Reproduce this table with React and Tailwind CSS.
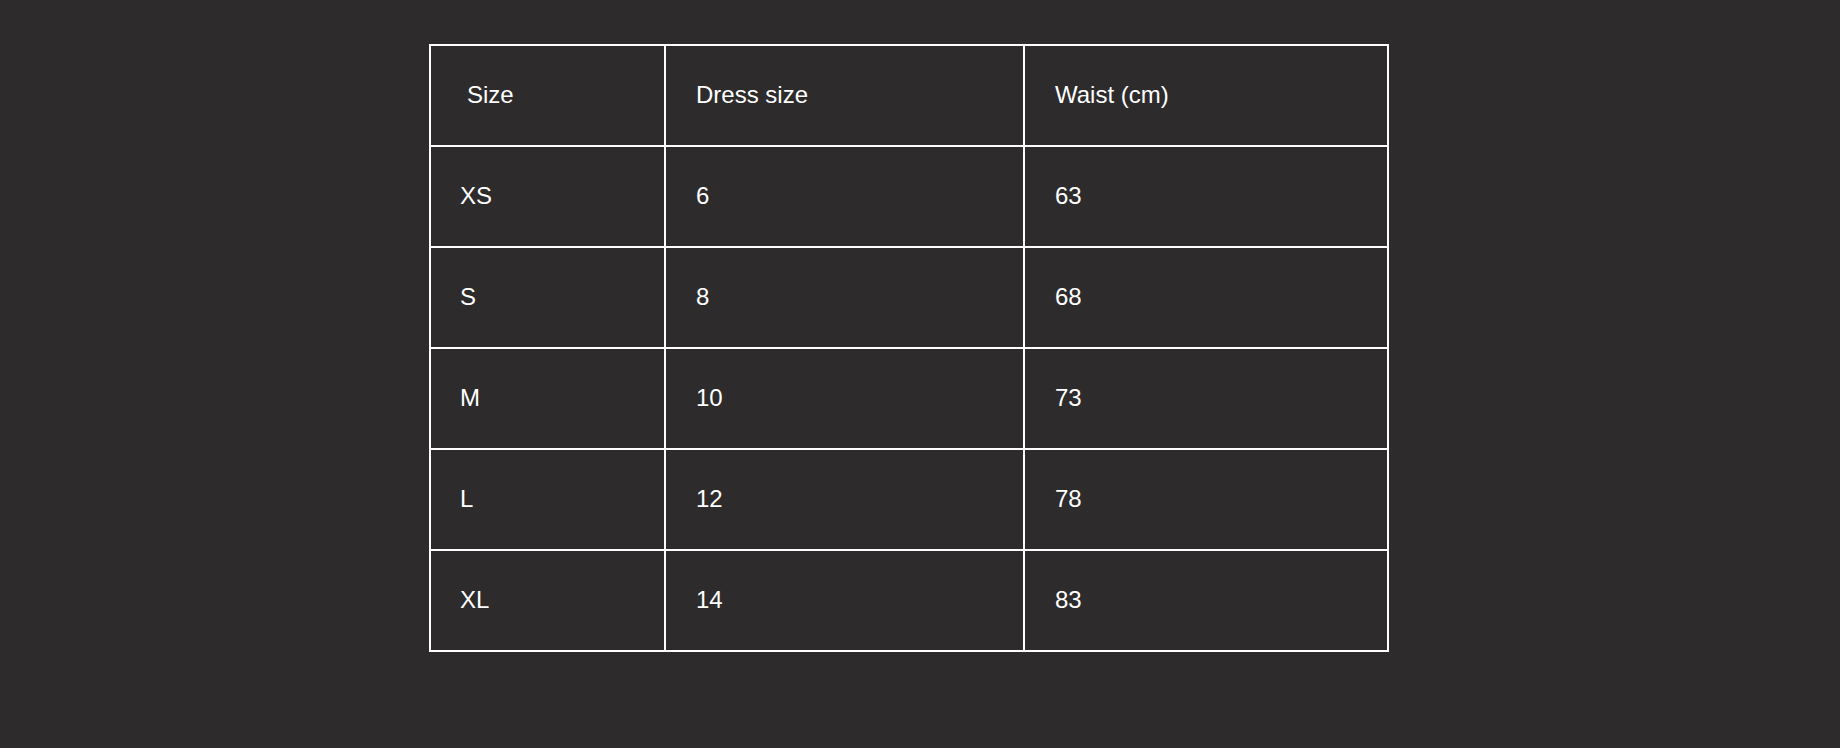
import React from 'react'

const rows = [
  ['XS', '6', '63'],
  ['S', '8', '68'],
  ['M', '10', '73'],
  ['L', '12', '78'],
  ['XL', '14', '83'],
]

export default function App() {
  return (
    <div
      className="min-h-[748px] w-full bg-[#2d2b2c] pl-[429px] pt-[44px] text-white"
      style={{ fontFamily: '"Liberation Sans", Arial, sans-serif' }}
    >
      <table className="w-[958px] table-fixed border-collapse border-2 border-white text-[24px]">
        <colgroup>
          <col className="w-[235px]" />
          <col className="w-[359px]" />
          <col className="w-[364px]" />
        </colgroup>
        <thead>
          <tr className="h-[101px]">
            <th className="border-2 border-white pb-[2px] pl-[36px] text-left font-normal">Size</th>
            <th className="border-2 border-white pb-[2px] pl-[30px] text-left font-normal">Dress size</th>
            <th className="border-2 border-white pb-[2px] pl-[30px] text-left font-normal">Waist (cm)</th>
          </tr>
        </thead>
        <tbody>
          {rows.map((r) => (
            <tr key={r[0]} className="h-[101px]">
              <td className="border-2 border-white pb-[2px] pl-[29px]">{r[0]}</td>
              <td className="border-2 border-white pb-[2px] pl-[30px]">{r[1]}</td>
              <td className="border-2 border-white pb-[2px] pl-[30px]">{r[2]}</td>
            </tr>
          ))}
        </tbody>
      </table>
    </div>
  )
}
